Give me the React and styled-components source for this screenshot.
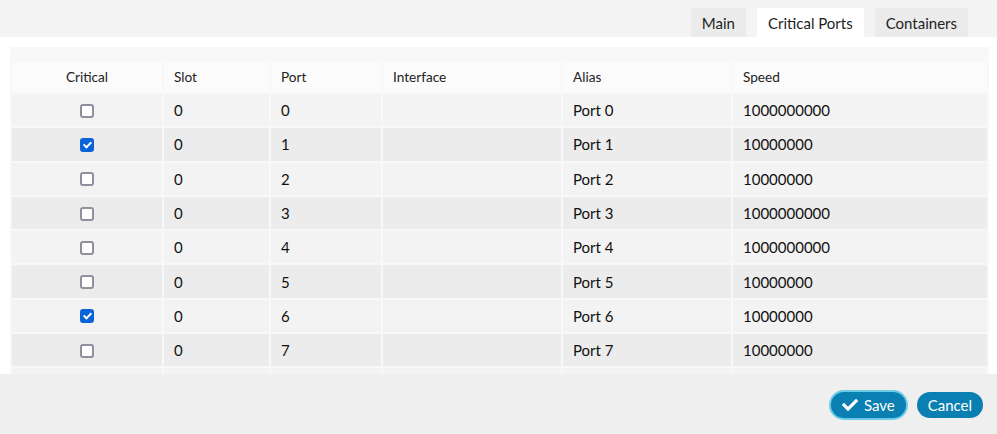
import React, { useState } from 'react';
import styled, { createGlobalStyle } from 'styled-components';
import { FaCheck } from 'react-icons/fa';

const GlobalStyle = createGlobalStyle`
  html, body {
    margin: 0;
    padding: 0;
    background: #ffffff;
  }
  body {
    font-family: Lato, 'Open Sans', sans-serif;
    color: #1b1b1b;
  }
`;

const ports = [
  { slot: 0, port: 0, alias: 'Port 0', speed: '1000000000', critical: false },
  { slot: 0, port: 1, alias: 'Port 1', speed: '10000000', critical: true },
  { slot: 0, port: 2, alias: 'Port 2', speed: '10000000', critical: false },
  { slot: 0, port: 3, alias: 'Port 3', speed: '1000000000', critical: false },
  { slot: 0, port: 4, alias: 'Port 4', speed: '1000000000', critical: false },
  { slot: 0, port: 5, alias: 'Port 5', speed: '10000000', critical: false },
  { slot: 0, port: 6, alias: 'Port 6', speed: '10000000', critical: true },
  { slot: 0, port: 7, alias: 'Port 7', speed: '10000000', critical: false },
  { slot: 0, port: 8, alias: 'Port 8', speed: '10000000', critical: false },
];

const tabs = ['Main', 'Critical Ports', 'Containers'];

const App = () => {
  const [active, setActive] = useState('Critical Ports');
  const [rows, setRows] = useState(ports);

  const toggle = idx => {
    setRows(rows.map((r, i) => (i === idx ? { ...r, critical: !r.critical } : r)));
  };

  return (
    <Page>
      <GlobalStyle />
      <TabBar>
        {tabs.map(tab => (
          <Tab key={tab} active={tab === active} onClick={() => setActive(tab)}>
            {tab}
          </Tab>
        ))}
      </TabBar>

      <Body>
        <Panel>
          <Table>
            <colgroup>
              <col style={{ width: 150 }} />
              <col style={{ width: 105 }} />
              <col style={{ width: 110 }} />
              <col style={{ width: 178 }} />
              <col style={{ width: 168 }} />
              <col />
            </colgroup>
            <thead>
              <tr>
                <Th center>Critical</Th>
                <Th>Slot</Th>
                <Th>Port</Th>
                <Th>Interface</Th>
                <Th>Alias</Th>
                <Th>Speed</Th>
              </tr>
            </thead>
            <tbody>
              {rows.map((row, i) => (
                <Row key={row.port} odd={i % 2 === 1}>
                  <Td center>
                    <Check
                      type="checkbox"
                      checked={row.critical}
                      onChange={() => toggle(i)}
                    />
                  </Td>
                  <Td>{row.slot}</Td>
                  <Td>{row.port}</Td>
                  <Td />
                  <Td>{row.alias}</Td>
                  <Td>{row.speed}</Td>
                </Row>
              ))}
            </tbody>
          </Table>
        </Panel>
      </Body>

      <Footer>
        <Button focused>
          <FaCheck size={16} />
          Save
        </Button>
        <Button>Cancel</Button>
      </Footer>
    </Page>
  );
};

export default App;

const Page = styled.div`
  width: 997px;
  height: 434px;
  display: flex;
  flex-direction: column;
  overflow: hidden;
`;

const TabBar = styled.div`
  height: 37px;
  background: #f4f4f4;
  display: flex;
  align-items: flex-end;
  justify-content: flex-end;
  gap: 11px;
  padding-right: 29px;
  box-sizing: border-box;
`;

const Tab = styled.div`
  height: 29px;
  padding: 0 11px;
  display: flex;
  align-items: center;
  font-size: 15px;
  color: #1e1e1e;
  background: ${p => (p.active ? '#ffffff' : '#ebebeb')};
  cursor: pointer;
`;

const Body = styled.div`
  height: 337px;
  overflow: hidden;
  background: #ffffff;
  padding: 10px 8px 0 10px;
  box-sizing: border-box;
`;

const Panel = styled.div`
  background: #f8f8f8;
  padding-top: 13px;
`;

const Table = styled.table`
  width: 100%;
  table-layout: fixed;
  border-collapse: separate;
  border-spacing: 2px;
  font-size: 15px;
`;

const Th = styled.th`
  height: 30px;
  padding: 0 10px;
  background: #fbfbfb;
  font-weight: normal;
  font-size: 13.6px;
  color: #222;
  text-align: ${p => (p.center ? 'center' : 'left')};
  box-sizing: border-box;
`;

const Row = styled.tr`
  background: ${p => (p.odd ? '#ececec' : '#f3f3f3')};
`;

const Td = styled.td`
  height: 32.3px;
  padding: 0 10px;
  box-sizing: border-box;
  color: #111;
  text-align: ${p => (p.center ? 'center' : 'left')};
  vertical-align: middle;
`;

const Check = styled.input`
  appearance: none;
  position: relative;
  width: 14px;
  height: 14px;
  margin: 4px 0 0 0;
  box-sizing: border-box;
  border: 2px solid #8f8f9d;
  border-radius: 3px;
  background: #ffffff;
  cursor: pointer;

  &:checked {
    border-color: #0b63d8;
    background: #0b63d8;
  }

  &:checked::after {
    content: '';
    position: absolute;
    left: 3px;
    top: 0px;
    width: 3px;
    height: 6px;
    border: solid #ffffff;
    border-width: 0 2px 2px 0;
    transform: rotate(45deg);
  }
`;

const Footer = styled.div`
  flex: 1;
  background: #efefef;
  display: flex;
  align-items: center;
  justify-content: flex-end;
  gap: 11px;
  padding-right: 14px;
`;

const Button = styled.button`
  display: flex;
  align-items: center;
  gap: 6px;
  height: 26px;
  padding: 0 11px;
  border: none;
  border-radius: 13px;
  background: #0a7fb1;
  color: #ffffff;
  font-family: Lato, sans-serif;
  font-size: 15px;
  cursor: pointer;
  box-shadow: ${p => (p.focused ? '0 0 0 2px #6ccbe6' : 'none')};
  margin-top: 2px;
`;
